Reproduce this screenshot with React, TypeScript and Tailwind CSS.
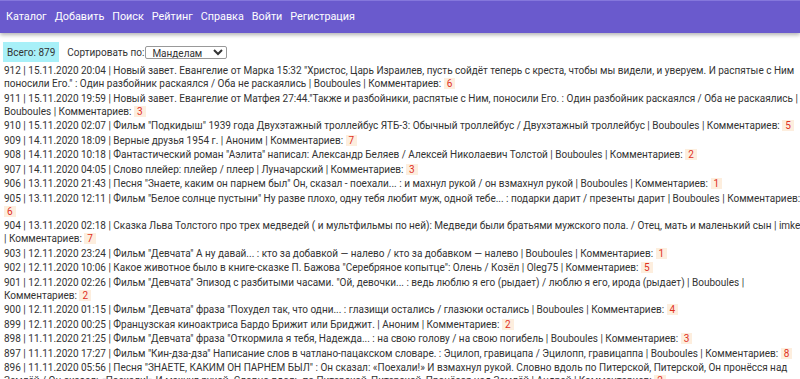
const nav = ["Каталог", "Добавить", "Поиск", "Рейтинг", "Справка", "Войти", "Регистрация"]

const rows = [
    { id: 912, date: "15.11.2020 20:04", text: "Новый завет. Евангелие от Марка 15:32 \"Христос, Царь Израилев, пусть сойдёт теперь с креста, чтобы мы видели, и уверуем. И распятые с Ним поносили Его.\" : Один разбойник раскаялся / Оба не раскаялись", user: "Bouboules", count: 6 },
    { id: 911, date: "15.11.2020 19:59", text: "Новый завет. Евангелие от Матфея 27:44.\"Также и разбойники, распятые с Ним, поносили Его. : Один разбойник раскаялся / Оба не раскаялись", user: "Bouboules", count: 3 },
    { id: 910, date: "15.11.2020 02:07", text: "Фильм \"Подкидыш\" 1939 года Двухэтажный троллейбус ЯТБ-3: Обычный троллейбус / Двухэтажный троллейбус", user: "Bouboules", count: 5 },
    { id: 909, date: "14.11.2020 18:09", text: "Верные друзья 1954 г.", user: "Аноним", count: 7 },
    { id: 908, date: "14.11.2020 10:18", text: "Фантастический роман \"Аэлита\" написал: Александр Беляев / Алексей Николаевич Толстой", user: "Bouboules", count: 2 },
    { id: 907, date: "14.11.2020 04:05", text: "Слово плейер: плейер / плеер", user: "Луначарский", count: 3 },
    { id: 906, date: "13.11.2020 21:43", text: "Песня \"Знаете, каким он парнем был\" Он, сказал - поехали... : и махнул рукой / он взмахнул рукой", user: "Bouboules", count: 1 },
    { id: 905, date: "13.11.2020 12:11", text: "Фильм \"Белое солнце пустыни\" Ну разве плохо, одну тебя любит муж, одной тебе... : подарки дарит / презенты дарит", user: "Bouboules", count: 6 },
    { id: 904, date: "13.11.2020 02:18", text: "Сказка Льва Толстого про трех медведей ( и мультфильмы по ней): Медведи были братьями мужского пола. / Отец, мать и маленький сын", user: "imker", count: 7 },
    { id: 903, date: "12.11.2020 23:24", text: "Фильм \"Девчата\" А ну давай... : кто за добавкой — налево / кто за добавком — налево", user: "Bouboules", count: 1 },
    { id: 902, date: "12.11.2020 10:06", text: "Какое животное было в книге-сказке П. Бажова \"Серебряное копытце\": Олень / Козёл", user: "Oleg75", count: 5 },
    { id: 901, date: "12.11.2020 02:26", text: "Фильм \"Девчата\" Эпизод с разбитыми часами. \"Ой, девочки... : ведь люблю я его (рыдает) / люблю я его, ирода (рыдает)", user: "Bouboules", count: 2 },
    { id: 900, date: "12.11.2020 01:15", text: "Фильм \"Девчата\" фраза \"Похудел так, что одни... : глазищи остались / глазюки остались", user: "Bouboules", count: 4 },
    { id: 899, date: "12.11.2020 00:25", text: "Французская киноактриса Бардо Брижит или Бриджит.", user: "Аноним", count: 2 },
    { id: 898, date: "11.11.2020 21:25", text: "Фильм \"Девчата\" фраза \"Откормила я тебя, Надежда... : на свою голову / на свою погибель", user: "Bouboules", count: 3 },
    { id: 897, date: "11.11.2020 17:27", text: "Фильм \"Кин-дза-дза\" Написание слов в чатлано-пацакском словаре. : Эцилоп, гравицапа / Эцилопп, гравицаппа", user: "Bouboules", count: 8 },
    { id: 896, date: "11.11.2020 05:56", text: "Песня \"ЗНАЕТЕ, КАКИМ ОН ПАРНЕМ БЫЛ\" : Он сказал: «Поехали!» И взмахнул рукой. Словно вдоль по Питерской, Питерской, Он пронёсся над Землёй / Он сказал: «Поехали!» И махнул рукой. Словно вдоль по Питерской, Питерской, Пронёсся над Землёй", user: "Андрей", count: 2 },
]

function App() {
    return (
        <div className="min-h-screen overflow-hidden bg-white text-[#333] font-['Roboto',sans-serif]">
            <nav className="h-[33px] bg-[#6a5acd] border-t border-[#8577dc] shadow-[0_2px_4px_rgba(0,0,0,0.3)] flex items-center px-[6px] gap-[8px] text-[10.8px] text-white">
                {nav.map((item) => (
                    <a key={item} href="#">{item}</a>
                ))}
            </nav>

            <div className="flex items-center gap-[8px] px-[3px] pt-[9px] pb-[2px] text-[10px]">
                <span className="bg-[#a8f0f8] px-[4px] h-[20px] flex items-center">Всего: 879</span>
                <label className="flex items-center gap-[1px]">
                    Сортировать по:
                    <select className="h-[13px] w-[82px] border border-[#999] rounded-[2px] text-[10px] leading-none px-[2px]">
                        <option>Манделам</option>
                    </select>
                </label>
            </div>

            <div className="w-[806px] pl-[4px] text-[10px] leading-[13px]">
                {rows.map((r) => (
                    <div key={r.id} className="mb-[1.5px]">
                        {r.id} | {r.date} | {r.text} | {r.user} | Комментариев:{" "}
                        <span className="bg-[#fdeede] text-[#e0301e] px-[3px]">{r.count}</span>
                    </div>
                ))}
            </div>
        </div>
    )
}

export default App
